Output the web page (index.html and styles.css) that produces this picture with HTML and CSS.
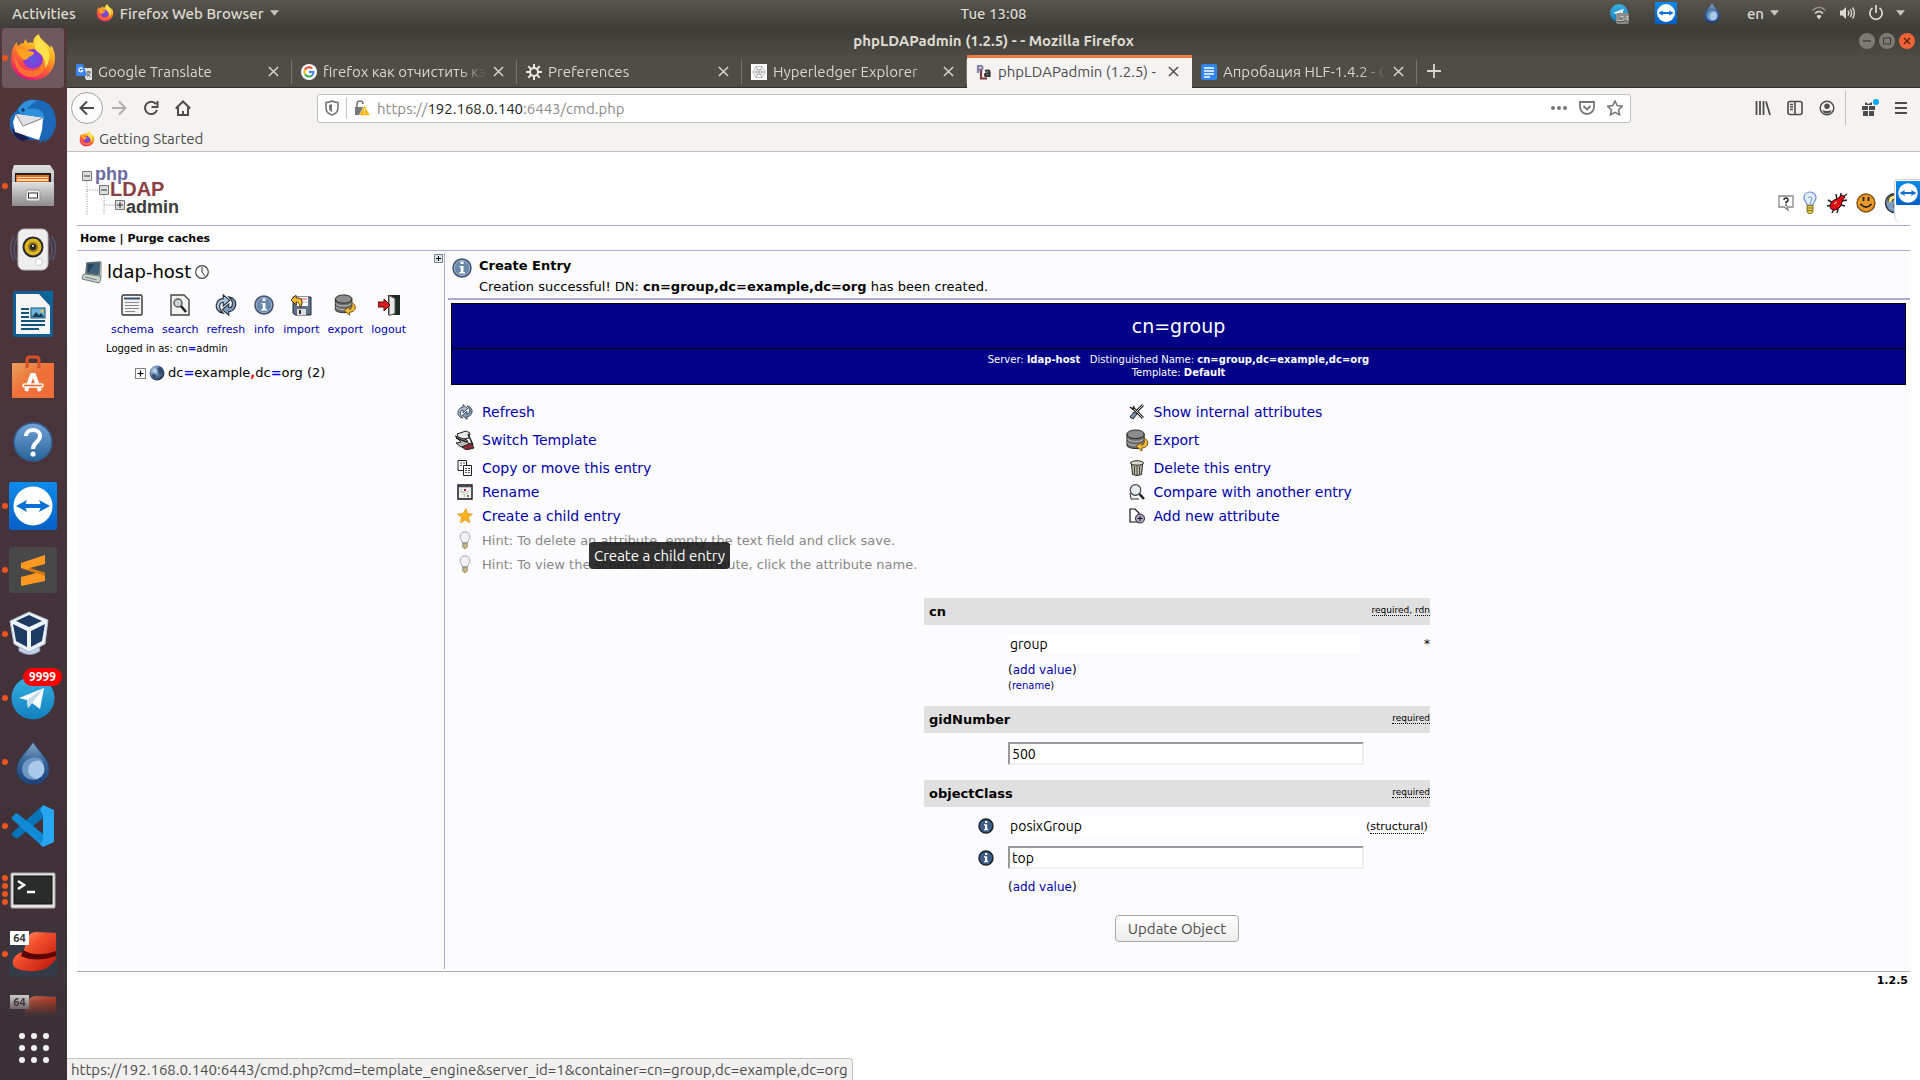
FILE: index.html
```html
<!doctype html>
<html lang="en">
	<head>
		<meta charset="utf-8">
		<title>phpLDAPadmin (1.2.5) -</title>
		<link rel="stylesheet" href="styles.css">
	</head>
	<body>
		<!-- shared icons -->
		<svg class="defs" width="0" height="0">
			<defs>
				<linearGradient id="g-fire" x1="0.8" y1="0" x2="0.3" y2="1">
					<stop offset="0" stop-color="#fff44f"/><stop offset="0.35" stop-color="#ffb01f"/><stop offset="0.65" stop-color="#ff5f36"/><stop offset="1" stop-color="#e4107c"/>
				</linearGradient>
				<radialGradient id="g-globe"><stop offset="0" stop-color="#5c5de0"/><stop offset="1" stop-color="#9033d8"/></radialGradient>
				<linearGradient id="g-tv" x1="0" y1="0" x2="0" y2="1"><stop offset="0" stop-color="#0d8bea"/><stop offset="1" stop-color="#0560c8"/></linearGradient>
				<linearGradient id="g-tg" x1="0" y1="0" x2="0" y2="1"><stop offset="0" stop-color="#38b0e3"/><stop offset="1" stop-color="#1180bd"/></linearGradient>
				<linearGradient id="g-drop" x1="0" y1="0" x2="0" y2="1"><stop offset="0" stop-color="#8fa9c4"/><stop offset="0.4" stop-color="#3f6d9e"/><stop offset="1" stop-color="#1c3f7c"/></linearGradient>
				<linearGradient id="g-silver" x1="0" y1="0" x2="0" y2="1"><stop offset="0" stop-color="#e0e0e0"/><stop offset="1" stop-color="#8c8c8c"/></linearGradient>
				<linearGradient id="g-hat" x1="0" y1="0" x2="1" y2="1"><stop offset="0" stop-color="#ffab84"/><stop offset="0.4" stop-color="#f4502d"/><stop offset="1" stop-color="#b81208"/></linearGradient>
				<linearGradient id="g-help" x1="0" y1="0" x2="0" y2="1"><stop offset="0" stop-color="#72a1d8"/><stop offset="1" stop-color="#27659a"/></linearGradient>
				<linearGradient id="g-bag" x1="0" y1="0" x2="1" y2="1"><stop offset="0" stop-color="#e9a05c"/><stop offset="0.5" stop-color="#ee7037"/><stop offset="1" stop-color="#ef6e38"/></linearGradient>
				<radialGradient id="g-earth" cx="0.35" cy="0.35" r="0.7"><stop offset="0" stop-color="#cfe0ee"/><stop offset="0.5" stop-color="#5e83ad"/><stop offset="1" stop-color="#20324f"/></radialGradient>
			</defs>
			<symbol id="i-firefox" viewBox="0 0 48 48">
				<path fill="url(#g-fire)" d="M4 14c1-3 3-5 4-6 0 2 0 3 1 4 2-2 4-3 6-3 0-2 1-3 2-4 0 2 1 3 2 4 4-1 5 0 5 0 0-4 2-7 6-9 0 4 5 7 9 11 1 1 2 2 2 3 1-1 1-2 1-3 4 6 5 13 3 20-3 9-11 15-21 15C11 46 2 37 2 26c0-5 1-9 2-12z"/>
				<circle cx="24" cy="25" r="10" fill="url(#g-globe)"/>
				<path fill="#ffa21f" d="M7 15c5-1 8 1 12 2 4 0 6 1 6 2 0 2-4 3-5 4-1 2-3 3-5 3-3-2-6-6-8-11z"/>
				<path fill="#ff8a22" d="M5 20c4 11 8 17 18 17 6 0 10-3 11-8 3 7-2 14-12 14S5 35 5 20z" opacity=".7"/>
				<path fill="#ffe04a" d="M30 2c0 5 7 8 9 13 3 6 1 15-3 19 1-8-2-12-7-16-5-3-4-11 1-16z"/>
			</symbol>
			<symbol id="i-tv" viewBox="0 0 48 48">
				<rect width="48" height="48" rx="2" fill="url(#g-tv)"/>
				<circle cx="24" cy="24" r="19.500" fill="#fff"/>
				<path fill="#0b70d5" d="M7 24l11-6-1.500 4h15L30 18l11 6-11 6 1.500-4h-15l1.500 4z"/>
			</symbol>
			<symbol id="i-telegram" viewBox="0 0 48 48">
				<circle cx="24" cy="24" r="21.500" fill="url(#g-tg)"/>
				<path fill="#fff" d="M10 24l25-10-4 21-8-6-4 5-1-8z"/><path fill="#c2dcec" d="M18 26l17-12-12 15-4 5z"/>
			</symbol>
			<symbol id="i-deluge" viewBox="0 0 48 48">
				<path fill="url(#g-drop)" stroke="#24477c" d="M24 4c6 10 16 17 16 27 0 9-7 15-16 15S8 40 8 31C8 21 18 14 24 4z"/>
				<circle cx="25" cy="31" r="10.500" fill="#a9c8ea"/>
				<path fill="#6d97c5" d="M35 24c-7-4-16 0-16 8 0 5 4 8 8 9-8 2-14-3-14-10 0-10 15-16 22-7z"/>
			</symbol>
			<symbol id="i-close" viewBox="0 0 12 12"><path d="M1 1l10 10M11 1L1 11" fill="none" stroke="currentColor" stroke-width="1.600"/></symbol>
			<symbol id="i-info" viewBox="0 0 20 20">
				<circle cx="10" cy="10" r="9" fill="#6a87ac" stroke="#44516a" stroke-width="1.500"/>
				<circle cx="10" cy="10" r="7.600" fill="none" stroke="#9ab3d2"/>
				<path fill="#fff" d="M8.500 3.500h3v2.600h-3zM7.500 8h4v6h1.500v1.500H7.300V14h1.400V9.300H7.500z"/>
			</symbol>
			<symbol id="i-info-dark" viewBox="0 0 16 16">
				<circle cx="8" cy="8" r="7" fill="#3d5c86" stroke="#1a1e28" stroke-width="1.400"/>
				<path fill="#fff" d="M7 3h2.200v2H7zM6 6.300h3.200v4.700h1v1.300H6V11h1V7.500H6z"/>
			</symbol>
			<symbol id="i-refresh" viewBox="0 0 24 24">
				<path fill="#a9c3dc" stroke="#27313d" stroke-width="1.300" d="M9 21C3 20 0 15 2 10c1-3 4-5 7-5V1l7 6-7 6V9c-3 0-4 2-4 5 0 3 2 5 4 7z"/>
				<path fill="#7f9fc0" stroke="#27313d" stroke-width="1.300" d="M15 3c6 1 9 6 7 11-1 3-4 5-7 5v4l-7-6 7-6v4c3 0 4-2 4-5 0-3-2-5-4-7z"/>
			</symbol>
			<symbol id="i-export" viewBox="0 0 24 24">
				<path fill="#6d6d6d" stroke="#222" d="M1.500 5v12c0 4 17 5 18 0V5z"/>
				<path fill="none" stroke="#c8c8c8" d="M2 10c1 4 16 4 17 0M2 14c1 4 16 4 17 0"/>
				<ellipse cx="10.500" cy="5.500" rx="9" ry="4.500" fill="#8c8c8c" stroke="#222"/>
				<path fill="#f3bd3c" stroke="#6b4808" d="M19 9c6 3 6 10-2 11v3l-6-5 6-4v3c3-1 3-4 2-8z"/>
			</symbol>
			<symbol id="i-bulb" viewBox="0 0 16 20">
				<path fill="#eef2f6" stroke="#9aa0a6" d="M8 1C4.500 1 2.500 3.500 2.500 6.500 2.500 9.500 5 10.500 5 13h6c0-2.500 2.500-3.500 2.500-6.500C13.500 3.500 11.500 1 8 1z"/>
				<path fill="#c6b67c" stroke="#77715c" stroke-width=".8" d="M5.500 13.500h5V18l-1.500 1.500H7L5.500 18z"/>
			</symbol>
			<symbol id="i-caret" viewBox="0 0 10 6"><path fill="currentColor" d="M0 0h10L5 6z"/></symbol>
			<symbol id="i-plusbox" viewBox="0 0 11 11"><rect x=".5" y=".5" width="10" height="10" fill="#fff" stroke="#808080"/><path stroke="#000" stroke-width="1.200" d="M2.500 5.500h6M5.500 2.500v6"/></symbol>
		</svg>

		<header class="topbar">
			<nav class="topbar-left">
				<button>Activities</button>
				<button class="app-menu"><svg width="18" height="18"><use href="#i-firefox"/></svg>Firefox Web Browser<svg class="caret" width="9" height="6"><use href="#i-caret"/></svg></button>
			</nav>
			<time class="clock">Tue 13:08</time>
			<div class="tray">
				<span class="tray-tg"><svg width="20" height="22"><use href="#i-telegram"/></svg><i>..54</i></span>
				<svg width="22" height="22"><use href="#i-tv"/></svg>
				<svg width="18" height="22" viewBox="5 2 38 46"><use href="#i-deluge" width="48" height="48"/></svg>
				<button class="lang">en<svg class="caret" width="9" height="6"><use href="#i-caret"/></svg></button>
				<div class="system">
					<svg width="16" height="14" viewBox="0 0 16 14"><g fill="none" stroke="#dfdbd2" stroke-width="1.600"><path d="M1.500 4.500c4-4 9-4 13 0" opacity=".5"/><path d="M4 7.500c2.500-2.500 5.500-2.500 8 0"/></g><path fill="#dfdbd2" d="M5.500 10c1.500-1.300 3.500-1.300 5 0L8 13.500z"/></svg>
					<svg width="17" height="14" viewBox="0 0 17 14"><path fill="#dfdbd2" d="M1 4.500h2.500L7 1v12L3.500 9.500H1z"/><path fill="none" stroke="#dfdbd2" stroke-width="1.400" d="M9 4.500q1.500 2.500 0 5M11.300 3q2.500 4 0 8M13.600 1.500q3.500 5.500 0 11"/></svg>
					<svg width="16" height="16" viewBox="0 0 16 16"><path fill="none" stroke="#dfdbd2" stroke-width="1.700" d="M4.500 3a6.200 6.200 0 1 0 7 0M8 0v8"/></svg>
					<svg class="caret" width="9" height="6"><use href="#i-caret"/></svg>
				</div>
			</div>
		</header>

		<div class="desktop">
			<aside class="dock">
				<ul class="launchers">
					<li class="active run"><svg width="48" height="48"><use href="#i-firefox"/></svg></li>
					<li><svg width="48" height="48" viewBox="0 0 48 48">
						<path fill="#1c68b8" d="M8 12C12 4 21 0 26 2c13-1 22 10 21 24-1 8-5 14-10 17l-2 2 1-4-6 5 1-4H12C4 38 0 32 1 23c0-4 3-8 7-11z"/>
						<path fill="#2f90dc" d="M9 12C13 3 22 0 28 3c-5 2-8 5-10 8 12-2 18 2 17 11L12 16z"/>
						<path fill="#181c50" d="M3 30c1 7 5 11 10 13l8-2z"/>
						<path fill="#fff" d="M7 16l27 4-1 12-3 10-24-8-2-10z"/><path fill="#e0e0e8" d="M7 16c2 6 4 10 8 12 7-2 14-4 19-8z"/><path fill="none" stroke="#888" d="M7 16l7 12 20-8"/>
						<circle cx="14" cy="12" r="1.800" fill="#17396b"/>
					</svg></li>
					<li class="run"><svg width="48" height="48" viewBox="0 0 48 48">
						<path fill="url(#g-silver)" d="M5 3h36l4 6v35H3V9z"/><path fill="#222" d="M6 11h36v9H6z"/><path fill="#e56a1c" d="M7 13h33v7H7z"/><path fill="#ffdcae" d="M8 15h31v1H8zM8 17h31v2H8z"/>
						<path fill="url(#g-silver)" d="M3 20h42v24H3z"/><rect x="17" y="28" width="14" height="11" rx="2" fill="#eee" stroke="#999"/><rect x="19.500" y="31" width="9" height="5" fill="#fff" stroke="#333"/>
					</svg></li>
					<li><svg width="48" height="48" viewBox="0 0 48 48">
						<path fill="none" stroke="#56658c" stroke-width="1.500" opacity=".7" d="M5 10q-7 12 0 25M8 12q-6 12 0 22M43 10q7 12 0 25M40 12q6 12 0 22"/>
						<rect x="9" y="3" width="30" height="41" rx="6" fill="#eee" stroke="#bbb"/><circle cx="24" cy="21" r="10.500" fill="#272727"/><circle cx="24" cy="21" r="8.500" fill="#e0b524"/><circle cx="24" cy="21" r="5" fill="#8d7420"/><circle cx="24" cy="21" r="3" fill="#222"/><circle cx="24" cy="20" r="1" fill="#fff"/><circle cx="30" cy="36" r="3.500" fill="#fff" stroke="#ccc"/>
					</svg></li>
					<li><svg width="48" height="48" viewBox="0 0 48 48">
						<path fill="#0f5f92" d="M6 1h26l12 12v32q0 2-2 2H6q-2 0-2-2V3q0-2 2-2z"/><path fill="#f5f5f5" d="M7 4h23l11 12v28H7z"/><path fill="#0769a2" d="M32 1h12v12z"/>
						<path stroke="#0f5678" stroke-width="2" d="M12 19h8M12 23h8M12 27h8M12 31h24M12 35h24M12 39h18"/><rect x="22" y="18" width="14" height="10" fill="#6fb4dc" stroke="#0f5678"/><path fill="#1f4057" d="M23 27l4-5 3 3 2-2 3 4z"/><circle cx="33" cy="21" r="1.500" fill="#f5c12e"/>
					</svg></li>
					<li><svg width="48" height="48" viewBox="0 0 48 48">
						<path fill="url(#g-bag)" d="M3 9h42v35H3z"/><path fill="none" stroke="#d65026" stroke-width="3" d="M18 14V6q0-3 3-3h6q3 0 3 3v8"/>
						<path fill="none" stroke="#fff" stroke-width="4" d="M17 37l6-16h2l6 16"/><rect x="14" y="30" width="20" height="3" rx="1.500" fill="#ee6230" stroke="#fff" stroke-width="1.500"/>
					</svg></li>
					<li><svg width="48" height="48" viewBox="0 0 48 48"><circle cx="24" cy="24" r="19" fill="url(#g-help)" stroke="#315e8d" stroke-width="1.500"/><path fill="none" stroke="#fff" stroke-width="4" d="M17 18c0-8 14-8 14 0 0 6-7 6-7 13"/><circle cx="24" cy="36" r="2.600" fill="#fff"/></svg></li>
					<li class="run"><svg width="48" height="48"><use href="#i-tv"/></svg></li>
					<li class="run"><svg width="48" height="48" viewBox="0 0 48 48"><rect y="1" width="48" height="46" rx="3" fill="#484848"/><path fill="#ff9820" d="M12 17l24-8v9l-15 4 15 5v8l-24 5v-9l15-4-15-5z"/><path fill="#d77710" d="M21 22l15 5v3l-18-6z"/></svg></li>
					<li class="run"><svg width="48" height="48" viewBox="0 0 48 48">
						<path fill="#c7d3e8" stroke="#8b9dbc" d="M10 35q10 6 20 0l1 6q-10 7-21 0z"/><path fill="#eef2fa" stroke="#a8b6d0" d="M20 2l19 8-3 24-16 8L5 34 1 11z"/>
						<path fill="#1d3a62" d="M20 5l13 6-13 6L7 11zM4 14l14 7v16L7 31zM22 21l14-7-3 17-11 6z"/>
					</svg></li>
					<li class="run"><svg width="48" height="48"><use href="#i-telegram"/></svg><span class="badge">9999</span></li>
					<li class="run"><svg width="48" height="48"><use href="#i-deluge"/></svg></li>
					<li class="run"><svg width="48" height="48" viewBox="0 0 48 48"><path fill="#0873b8" d="M34 3v13L9 36q-2 1-4-1l-2-2q-1-1 0-2z"/><path fill="#118bd6" d="M3 17q-1-1 0-2l3-3q2-1 3 0l25 20v13z"/><path fill="#27a6f2" d="M34 3l11 5v32l-11 5-3-3 3-3V13l-3-5z"/></svg></li>
					<li class="run run-many"><svg width="48" height="48" viewBox="0 0 48 48"><rect x="2" y="7" width="44" height="35" rx="1" fill="#e2e2e0" stroke="#aaa"/><rect x="5" y="10" width="38" height="28" fill="#2a2c2b" stroke="#111"/><path fill="none" stroke="#fff" stroke-width="2.500" d="M9 15l6 4-6 4M18 26h8"/></svg></li>
					<li class="run"><svg width="48" height="48" viewBox="0 0 48 48"><rect y="1" width="48" height="46" rx="2" fill="#353b46"/><path fill="url(#g-hat)" d="M14 24L18 8q3-6 9-6l20 1v26Q38 43 20 41 1 40 4 30q3-7 10-8z"/><path fill="#5c0604" d="M14 20q13 8 33 1v5q-21 7-35 0z"/></svg><span class="bits">64</span></li>
					<li class="fading"><svg width="48" height="48" viewBox="0 0 48 48"><rect y="1" width="48" height="46" rx="2" fill="#353b46"/><path fill="url(#g-hat)" d="M14 24L18 8q3-6 9-6l20 1v26Q38 43 20 41 1 40 4 30q3-7 10-8z"/></svg><span class="bits">64</span></li>
				</ul>
				<button class="show-apps" aria-label="Show Applications"><svg width="32" height="32" viewBox="0 0 32 32" fill="#f2f2f2"><circle cx="4" cy="4" r="3"/><circle cx="16" cy="4" r="3"/><circle cx="28" cy="4" r="3"/><circle cx="4" cy="16" r="3"/><circle cx="16" cy="16" r="3"/><circle cx="28" cy="16" r="3"/><circle cx="4" cy="28" r="3"/><circle cx="16" cy="28" r="3"/><circle cx="28" cy="28" r="3"/></svg></button>
			</aside>

			<section class="window">
				<div class="titlebar">
					<span class="title">phpLDAPadmin (1.2.5) - - Mozilla Firefox</span>
					<div class="controls">
						<button aria-label="Minimize"><svg width="16" height="16" viewBox="0 0 16 16"><path stroke="#3a3935" stroke-width="1.300" d="M4 8h8"/></svg></button>
						<button aria-label="Maximize"><svg width="16" height="16" viewBox="0 0 16 16"><rect x="4.500" y="5" width="7" height="6" fill="none" stroke="#3a3935"/></svg></button>
						<button class="close" aria-label="Close"><svg width="16" height="16" viewBox="0 0 16 16"><path stroke="#5a1d08" stroke-width="1.300" d="M5 5l6 6M11 5l-6 6"/></svg></button>
					</div>
				</div>

				<div class="tabs">
					<div class="tab">
						<svg width="16" height="16" viewBox="0 0 16 16"><path fill="#ddd" d="M6 4h9q1 0 1 1v11h-6z"/><path fill="#3b84f0" d="M0 1q0-1 1-1h6l4 12H1q-1 0-1-1z"/><path fill="none" stroke="#fff" stroke-width="1.200" d="M6.500 4.800a2 2 0 1 0 .2 1.800H5"/><path stroke="#666" d="M10 8h5M12.500 7v1.500M14 8.500q-1 3-3 4M11 9q1 3 3.500 3.500" fill="none"/></svg>
						<span>Google Translate</span><button aria-label="Close tab"><svg width="11" height="11"><use href="#i-close"/></svg></button>
					</div>
					<div class="tab">
						<svg width="16" height="16" viewBox="0 0 16 16"><circle cx="8" cy="8" r="8" fill="#fff"/><g fill="none" stroke-width="2"><path stroke="#ea4335" d="M4 5.800a4.600 4.600 0 0 1 7.300-1.200"/><path stroke="#fbbc05" d="M4 5.800a4.600 4.600 0 0 0 0 4.400"/><path stroke="#34a853" d="M4 10.200a4.600 4.600 0 0 0 7 1.200"/><path stroke="#4285f4" d="M11 11.400a4.600 4.600 0 0 0 1.500-3.400H8"/></g></svg>
						<span>firefox как отчистить кэш</span><button aria-label="Close tab"><svg width="11" height="11"><use href="#i-close"/></svg></button>
					</div>
					<div class="tab">
						<svg width="16" height="16" viewBox="0 0 16 16" fill="none" stroke="#e8e6e1"><circle cx="8" cy="8" r="4" stroke-width="2"/><path stroke-width="2" d="M8 0v4M8 12v4M0 8h4M12 8h4M2.300 2.300l2.800 2.800M10.900 10.900l2.800 2.800M13.700 2.300l-2.800 2.800M5.100 10.900l-2.800 2.800"/></svg>
						<span>Preferences</span><button aria-label="Close tab"><svg width="11" height="11"><use href="#i-close"/></svg></button>
					</div>
					<div class="tab">
						<svg width="16" height="16" viewBox="0 0 16 16"><path fill="#fff" d="M0 0h16v16H0z"/><g fill="none" stroke="#999" stroke-width=".7"><path d="M5 2.500h6L14 8l-3 5.500H5L2 8z"/><circle cx="8" cy="8" r="3"/><path d="M5 2.500l6 11M11 2.500l-6 11M2 8h12"/></g></svg>
						<span>Hyperledger Explorer</span><button aria-label="Close tab"><svg width="11" height="11"><use href="#i-close"/></svg></button>
					</div>
					<div class="tab current">
						<svg width="16" height="16" viewBox="0 0 16 16" fill="none" stroke-width="2.200"><path stroke="#8080a8" d="M2 9V2h2.500q2 0 2 1.800t-2 1.800H2"/><path stroke="#80383c" d="M5 6v8.500h6"/><path stroke="#333" d="M9 7q4.500-1.500 4.500 1.500v4.500M13 9.500q-4-.5-4 1.500t4 .8"/></svg>
						<span>phpLDAPadmin (1.2.5) -</span><button aria-label="Close tab"><svg width="11" height="11"><use href="#i-close"/></svg></button>
					</div>
					<div class="tab">
						<svg width="16" height="16" viewBox="0 0 16 16"><rect width="16" height="16" rx="2" fill="#3086f6"/><path stroke="#fff" stroke-width="1.600" d="M3 4h10M3 7h10M3 10h10M3 13h6"/></svg>
						<span>Апробация HLF-1.4.2 - G</span><button aria-label="Close tab"><svg width="11" height="11"><use href="#i-close"/></svg></button>
					</div>
					<button class="new-tab" aria-label="New tab"><svg width="14" height="14" viewBox="0 0 14 14"><path stroke="currentColor" stroke-width="1.800" d="M7 0v14M0 7h14"/></svg></button>
				</div>

				<div class="navbar">
					<button class="back" aria-label="Back"><svg width="16" height="16" viewBox="0 0 16 16"><path d="M15 8H1.500M8 1.500L1.500 8 8 14.500"/></svg></button>
					<button class="forward" aria-label="Forward"><svg width="16" height="16" viewBox="0 0 16 16"><path d="M1 8h13.500M8 1.500L14.500 8 8 14.500"/></svg></button>
					<button aria-label="Reload"><svg width="16" height="16" viewBox="0 0 16 16"><path d="M13 4a6.200 6.200 0 1 0 1 6M14.500 1v6h-6"/></svg></button>
					<button aria-label="Home"><svg width="16" height="16" viewBox="0 0 16 16"><path d="M.8 8.500L8 1.500l7.200 7M3 7v8h10V7M8 15v-4"/></svg></button>
					<div class="urlbar">
						<svg width="14" height="16" viewBox="0 0 14 16"><path fill="none" stroke="#777" stroke-width="1.600" d="M1 2.500q3 0 6-1.500 3 1.500 6 1.500V8q0 5-6 7-6-2-6-7z"/><path fill="#777" d="M7 4v8q-3-1-3-4V5z"/></svg>
						<i class="url-sep"></i>
						<svg width="16" height="16" viewBox="0 0 16 16"><path fill="none" stroke="#777" stroke-width="1.600" d="M3 8V4q0-3 3-3t3 3"/><path fill="#777" d="M1 7h9v8H1z"/><path fill="#ffb400" stroke="#fff" stroke-width=".5" d="M10.500 5L16 15.500H5z"/><path stroke="#fff" stroke-width="1.300" d="M10.500 8.500v3M10.500 12.800v1.200"/></svg>
						<span class="url">https://<b>192.168.0.140</b>:6443/cmd.php</span>
						<svg width="16" height="6" viewBox="0 0 16 6" fill="#777"><circle cx="2" cy="3" r="2"/><circle cx="8" cy="3" r="2"/><circle cx="14" cy="3" r="2"/></svg>
						<svg width="16" height="16" viewBox="0 0 16 16" fill="none" stroke="#777" stroke-width="1.800"><path d="M1 2h14v5a7 7 0 0 1-14 0zM4.500 6L8 9.500 11.500 6"/></svg>
						<svg width="16" height="16" viewBox="0 0 16 16" fill="none" stroke="#777" stroke-width="1.600"><path d="M8 1l2.200 4.600 5 .7-3.600 3.500.9 5L8 12.400l-4.500 2.400.9-5L.8 6.300l5-.7z"/></svg>
					</div>
					<div class="tools">
						<button aria-label="Library"><svg width="16" height="16" viewBox="0 0 16 16"><path stroke-width="1.800" d="M1.500 1v14M5 1v14M8.500 1v14M11 1.500l4 13.500"/></svg></button>
						<button aria-label="Sidebars"><svg width="16" height="16" viewBox="0 0 16 16"><path stroke-width="1.600" d="M3 1.500h10q2 0 2 2v9q0 2-2 2H3q-2 0-2-2v-9q0-2 2-2zM8 1.500v13M3 4.500h3M3 7h3M3 9.500h3"/></svg></button>
						<button aria-label="Account"><svg width="16" height="16" viewBox="0 0 16 16"><circle cx="8" cy="8" r="6.800" stroke-width="1.500"/><path fill="#4d4d4d" stroke="none" d="M8 3.500a2.600 2.600 0 0 1 0 5.500 2.600 2.600 0 0 1 0-5.500zM3.500 10q4.500 2 9 0-1 3.500-4.500 3.500T3.500 10z"/></svg></button>
						<i class="tool-sep"></i>
						<button class="gift" aria-label="What's new"><svg width="18" height="18" viewBox="0 0 18 18"><g fill="#4d4d4d" stroke="none"><path d="M1 7h6v4H1zM8 7h6v4H8zM2 12h5v5H2zM8 12h5v5H8zM4 3l3.500 2L11 3v3H4z"/><circle cx="15" cy="3" r="3" fill="#00a9f4"/></g></svg></button>
						<button aria-label="Menu"><svg width="12" height="16" viewBox="0 0 12 16"><path stroke-width="2" d="M0 3h12M0 8h12M0 13h12"/></svg></button>
					</div>
				</div>
				<div class="bookmarks"><a href="#"><svg width="16" height="16"><use href="#i-firefox"/></svg>Getting Started</a></div>

				<main class="page">
					<div class="page-head">
						<svg class="logo" width="102" height="50" viewBox="0 0 102 50" role="img">
							<path stroke="#c4c4c4" stroke-width="2" stroke-dasharray="1 1.500" fill="none" d="M6 16v34M6 25h12M23 30v20M23 40h11"/>
							<g fill="#ddd" stroke="#777"><path d="M1.500 6.500h9v9h-9zM18.500 20.500h9v9h-9zM34.500 35.500h9v9h-9z"/></g>
							<path stroke="#333" d="M3 11h6M20 25h6M36 40h6M39 37v6"/>
							<text class="logo-php" x="14" y="15">php</text>
							<text class="logo-ldap" x="29" y="31">LDAP</text>
							<text class="logo-admin" x="45" y="48">admin</text>
						</svg>
						<div class="head-links">
							<a href="#" aria-label="Forum"><svg width="16" height="18" viewBox="0 0 16 18"><path fill="#fff" stroke="#888" stroke-width="1.300" d="M1 2h14v11H9l1 3-4-3H1z"/><path fill="none" stroke="#222" stroke-width="1.400" d="M6 6q0-2 2-2t2 2-2 2v1.500M8 10.500V12"/></svg></a>
							<a href="#" aria-label="Request a feature"><svg width="16" height="24" viewBox="0 0 16 24"><path fill="#e3ebff" stroke="#6b8ed8" stroke-width="1.200" d="M8 1C4 1 2 4 2 7s3 4 3 7h6c0-3 3-4 3-7s-2-6-6-6z"/><path fill="none" stroke="#7d9bdc" d="M6 7q2-3 4 0L8 13"/><path fill="#e6cb45" stroke="#86762a" d="M5 14.500h6V21l-2 1.500H7L5 21zM5 17h6M5 19.500h6"/></svg></a>
							<a href="#" aria-label="Report a bug"><svg width="22" height="22" viewBox="0 0 22 22"><path fill="none" stroke="#222" stroke-width="1.500" d="M2 8l5 3M1 14l6-1M6 21l2-4M11 21l1-4M10 2l1 6M15 1l-1 6M21 2l-4 3M21 8l-5 1M19 14l-4-1"/><path fill="#dc0d12" stroke="#3c0304" d="M4 14q1-6 7-7l5-4 3 2-3 4q0 7-7 9-5 0-5-4z"/><path stroke="#fff" d="M8 12l3-2"/></svg></a>
							<a href="#" aria-label="Donate"><svg width="20" height="22" viewBox="0 0 20 22"><circle cx="10" cy="11" r="9" fill="#e99a2b" stroke="#80500c" stroke-width="1.400"/><path stroke="#222" stroke-width="1.800" fill="none" d="M7.500 5v4M12.500 5v4M4.500 12q5.500 6 11 0"/></svg></a>
							<a href="#" aria-label="Help"><svg width="22" height="22" viewBox="0 0 22 22"><circle cx="11" cy="11" r="9.500" fill="#7d9fc2" stroke="#2d3643" stroke-width="1.500"/><path fill="none" stroke="#4a3d12" stroke-width="5" d="M6 10q0-5 5-5t5 4-4 5v2"/><path fill="none" stroke="#fbe489" stroke-width="3" d="M6 10q0-5 5-5t5 4-4 5v2M12 18v3"/></svg></a>
						</div>
						<div class="tv-panel"><svg width="24" height="24"><use href="#i-tv"/></svg></div>
					</div>
					<nav class="page-nav"><a href="#">Home</a> | <a href="#">Purge caches</a></nav>

					<div class="columns">
						<aside class="tree">
							<button class="expand" aria-label="Expand"><svg width="9" height="9" viewBox="0 0 9 9"><path fill="#d6e4e8" stroke="#70858c" d="M.5.5h8v8h-8z"/><path stroke="#000" d="M2 4.500h5M4.500 2v5"/></svg></button>
							<h2 class="server">
								<svg width="22" height="24" viewBox="0 0 22 24"><path fill="#3a607b" stroke="#5b6d70" stroke-width="1.500" d="M6 3l13-1-1 13-13-2z"/><path fill="#27465e" d="M7 4l6 0-5 8H7z"/><path fill="#ccd6ce" stroke="#6b7a75" d="M4 14l15 2 1 3-2 4L1 19l1-4z"/><path stroke="#717f79" d="M4 17l12 3M20 2v15"/></svg>
								<span>ldap-host</span>
								<svg width="14" height="14" viewBox="0 0 14 14"><circle cx="7" cy="7" r="6.300" fill="#fff" stroke="#444" stroke-width="1.200"/><path fill="none" stroke="#333" d="M7 2v5l3 4"/></svg>
							</h2>
							<ul class="server-menu">
								<li><a href="#"><svg width="22" height="22" viewBox="0 0 22 22"><rect x="1" y="1" width="20" height="20" rx="1.500" fill="#f4f4f4" stroke="#333" stroke-width="1.400"/><path stroke="#3a5078" stroke-width="2" d="M3 4.500h16"/><path stroke="#888" d="M4 8.500h14M4 11.500h14M4 14.500h14M4 17.500h10"/></svg>schema</a></li>
								<li><a href="#"><svg width="22" height="22" viewBox="0 0 22 22"><path fill="#f2f2ee" stroke="#444" stroke-width="1.400" d="M2 1h13l5 5v15H2z"/><circle cx="9" cy="9" r="4" fill="#cdd5d9" stroke="#555" stroke-width="1.400"/><path stroke="#222" stroke-width="2.600" d="M12 12l5 6"/></svg>search</a></li>
								<li><a href="#"><svg width="22" height="22"><use href="#i-refresh"/></svg>refresh</a></li>
								<li><a href="#"><svg width="22" height="22" viewBox="-1 -1 22 22"><use href="#i-info" width="20" height="20"/></svg>info</a></li>
								<li><a href="#"><svg width="22" height="22" viewBox="0 0 22 22"><path fill="#5f7088" stroke="#222b38" d="M3 3h18v18H5l-2-2z"/><path fill="#fff" d="M7 3h11v9H7z"/><path stroke="#d44" d="M8 5h9"/><path stroke="#bbb" d="M8 8h9"/><path fill="#ddd" d="M7 15h9v6H7z"/><path fill="#333" d="M9 16h2v4H9z"/><path fill="#f2bb3b" stroke="#5c3c05" d="M1 6l5-5v3q7-1 6 6l-2 4q0-6-4-6v3z"/></svg>import</a></li>
								<li><a href="#"><svg width="22" height="22"><use href="#i-export"/></svg>export</a></li>
								<li><a href="#"><svg width="22" height="22" viewBox="0 0 22 22"><path fill="#1e2c24" d="M10 1h12v20H10z"/><path fill="#e8e8e4" stroke="#555" d="M11 1.500l6 3v15l-6 2z"/><path fill="#d81e1e" stroke="#5a0a0a" d="M0 8h6V5l6 6-6 6v-4H0z"/></svg>logout</a></li>
							</ul>
							<p class="logged">Logged in as: cn<b class="eq">=</b>admin</p>
							<p class="node"><svg width="11" height="11"><use href="#i-plusbox"/></svg><svg class="earth" width="16" height="16" viewBox="0 0 16 16"><circle cx="8" cy="8" r="7.500" fill="url(#g-earth)"/><path fill="#1f3a5e" d="M8 3l4-1 2 4-3 4-2-3zM4 8l3 2-1 4-3-3z" opacity=".7"/></svg><a href="#">dc<b class="eq">=</b>example<b class="comma">,</b>dc<b class="eq">=</b>org (2)</a></p>
						</aside>

						<section class="entry">
							<div class="notice">
								<svg width="20" height="24" viewBox="0 0 20 20"><use href="#i-info"/></svg>
								<div><h3>Create Entry</h3><p>Creation successful! DN: <b>cn=group,dc=example,dc=org</b> has been created.</p></div>
							</div>
							<header class="entry-head">
								<h1>cn=group</h1>
								<p>Server: <b>ldap-host</b> &nbsp; Distinguished Name: <b>cn=group,dc=example,dc=org</b><br>Template: <b>Default</b></p>
							</header>

							<div class="actions">
								<ul>
									<li><svg width="16" height="16"><use href="#i-refresh"/></svg><a href="#">Refresh</a></li>
									<li class="tall"><svg width="22" height="20" viewBox="0 0 22 20"><path fill="#e8e8e8" stroke="#222" d="M3 4l9-3 4 2-1 5-10 2z"/><path fill="#bbb" stroke="#222" d="M1 6l12 4 2 5-8 2-5-4 5-1z"/><path fill="#8c2932" stroke="#222" d="M8 17l9-4 3 5-8 2z"/><path fill="none" stroke="#222" stroke-width="1.500" d="M14 4l5 11M2 8l11 4"/></svg><a href="#">Switch Template</a></li>
									<li><svg width="16" height="16" viewBox="0 0 16 16"><g fill="#fff" stroke="#222"><path d="M1 .5h8.500v10H1z"/><path d="M6.500 5.500h8v10h-8z"/></g><path stroke="#555" stroke-dasharray="2 1" d="M3 3h5M3 5.500h3M8 8.500h5M8 10.500h5M8 12.500h5"/></svg><a href="#">Copy or move this entry</a></li>
									<li><svg width="16" height="16" viewBox="0 0 16 16"><path fill="#f2f2ec" stroke="#111" stroke-width="1.400" d="M1 1h14v14H1z"/><path stroke="#446" stroke-width="1.500" d="M1 2.500h14"/><path fill="#b22" d="M7 5h2v2H7z"/><path fill="#585" d="M10 11h2v2h-2z"/><path stroke="#888" stroke-dasharray="1 1" d="M4 5v3h3v4h2M10 7v3" fill="none"/></svg><a href="#">Rename</a></li>
									<li class="hovered"><svg width="16" height="16" viewBox="0 0 16 16"><path fill="#fbb321" stroke="#d88a10" stroke-width=".6" d="M9 .5l1.500 5 5 .5-4 3.300 1.300 5.700-4.500-3L3.500 15l1-5.500L.5 6l5.500-.5z"/></svg><a href="#">Create a child entry</a><span class="tooltip">Create a child entry</span></li>
									<li class="hint"><svg width="16" height="18"><use href="#i-bulb"/></svg>Hint: To delete an attribute, empty the text field and click save.</li>
									<li class="hint"><svg width="16" height="18"><use href="#i-bulb"/></svg>Hint: To view the schema for an attribute, click the attribute name.</li>
								</ul>
								<ul>
									<li><svg width="16" height="16" viewBox="0 0 16 16"><path stroke="#222" stroke-width="2.800" d="M4 4l10 10M14 1L6 9"/><path stroke="#ddd" d="M4 4l10 10M14 1L6 9"/><path fill="none" stroke="#222" stroke-width="1.500" d="M1 3l3 2 1-3"/><path fill="#7894b6" stroke="#222" d="M1 13l4-5 3 2-4 5z"/></svg><a href="#">Show internal attributes</a></li>
									<li class="tall"><svg width="23" height="23"><use href="#i-export"/></svg><a href="#">Export</a></li>
									<li><svg width="16" height="16" viewBox="0 0 16 16"><path fill="#b9b9a8" stroke="#222" d="M2.500 4h11l-1 10.500q-4.500 2-9 0z"/><path stroke="#44443c" d="M5.500 6v8M8 6v9M10.500 6v8"/><ellipse cx="8" cy="3" rx="6.500" ry="2.200" fill="#deded0" stroke="#222"/></svg><a href="#">Delete this entry</a></li>
									<li><svg width="16" height="16" viewBox="0 0 16 16"><path fill="#eee" stroke="#333" d="M1 9l1 6h8"/><circle cx="6.500" cy="6" r="5.300" fill="#e4ecef" stroke="#444" stroke-width="1.200"/><path stroke="#222" stroke-width="2.600" d="M10.500 10l4.500 5"/></svg><a href="#">Compare with another entry</a></li>
									<li><svg width="16" height="16" viewBox="0 0 16 16"><path fill="#fff" stroke="#111" stroke-width="1.200" d="M1 1h5l4 4v9H1z"/><circle cx="11" cy="10.500" r="4.500" fill="#b0a4cc" stroke="#222"/><path stroke="#111" d="M8.500 10.500h5M11 8v5"/></svg><a href="#">Add new attribute</a></li>
								</ul>
							</div>

							<form class="attributes">
								<div class="attr-head"><label for="cn">cn</label><span><u>required</u>, <u>rdn</u></span></div>
								<div class="attr-row"><span></span><input id="cn" class="fixed" type="text" value="group" readonly><span class="mark">*</span></div>
								<div class="attr-links">(<a href="#">add value</a>)<small>(<a href="#">rename</a>)</small></div>

								<div class="attr-head"><label for="gid">gidNumber</label><span><u>required</u></span></div>
								<div class="attr-row"><span></span><input id="gid" type="text" value="500"></div>

								<div class="attr-head"><label for="oc">objectClass</label><span><u>required</u></span></div>
								<div class="attr-row"><svg width="16" height="16"><use href="#i-info-dark"/></svg><input id="oc" class="fixed" type="text" value="posixGroup" readonly><span class="kind">(<u>structural</u>)</span></div>
								<div class="attr-row next"><svg width="16" height="16"><use href="#i-info-dark"/></svg><input type="text" value="top" aria-label="objectClass"></div>
								<div class="attr-links">(<a href="#">add value</a>)</div>
								<button class="update" type="button">Update Object</button>
							</form>
						</section>
					</div>
					<footer class="version">1.2.5</footer>
				</main>
				<div class="status">https://192.168.0.140:6443/cmd.php?cmd=template_engine&amp;server_id=1&amp;container=cn=group,dc=example,dc=org</div>
			</section>
		</div>
	</body>
</html>
```
FILE: styles.css
```css
* {
	box-sizing: border-box;
}

body {
	margin: 0;
	height: 100vh;
	display: flex;
	flex-direction: column;
	overflow: hidden;
	font-family: Ubuntu, "Noto Sans", sans-serif;
	font-size: 15px;
}

button {
	margin: 0;
	padding: 0;
	border: 0;
	background: none;
	color: inherit;
	font: inherit;
}

svg {
	flex: none;
	display: block;
}

ul, p, h1, h2, h3 {
	margin: 0;
	padding: 0;
	list-style: none;
}

a {
	color: #0000aa;
	text-decoration: none;
}

.defs {
	position: absolute;
}

/* gnome top bar */
.topbar {
	display: grid;
	grid-template-columns: 67px 1fr auto 1fr;
	align-items: center;
	height: 28px;
	padding-bottom: 2px;
	background: linear-gradient(#5a564e, #3e3d38);
	color: #dfdbd2;
	font-weight: 500;
	text-shadow: 0 1px 1px #2a2926;
}

.topbar-left {
	grid-column: 1 / 3;
	display: flex;
	gap: 20px;
	padding-left: 12px;
}

.app-menu, .lang {
	display: flex;
	align-items: center;
	gap: 6px;
}

.caret {
	color: #c9c5bc;
}

.tray {
	display: flex;
	align-items: center;
	justify-content: flex-end;
	gap: 26px;
	padding-right: 15px;
}

.tray-tg {
	position: relative;
}

.tray-tg i {
	position: absolute;
	right: 0;
	bottom: 0;
	background: #8c8c8c;
	border-radius: 2px;
	font-size: 8px;
	font-style: normal;
	line-height: 11px;
}

.system {
	display: flex;
	align-items: center;
	gap: 12px;
	margin-left: 6px;
}

.desktop {
	flex: 1;
	min-height: 0;
	display: flex;
}

/* dock */
.dock {
	width: 67px;
	display: flex;
	flex-direction: column;
	background: linear-gradient(#523639, #46333b 50%, #3c3136);
}

.launchers {
	flex: 1;
	min-height: 0;
	overflow: hidden;
}

.launchers li {
	position: relative;
	display: flex;
	align-items: center;
	justify-content: center;
	width: 62px;
	height: 60px;
	margin: 0 2px 4px;
	border-radius: 4px;
}

.launchers .active {
	background: #70595e;
}

.run::before {
	content: "";
	position: absolute;
	left: 0;
	width: 6px;
	height: 6px;
	border-radius: 3px;
	background: #e95420;
}

.run-many::before {
	top: 15px;
	box-shadow: 0 8px #e95420, 0 16px #e95420, 0 24px #e95420;
}

.badge {
	position: absolute;
	top: 0;
	right: 2px;
	padding: 0 6px;
	border-radius: 10px;
	background: #f00;
	color: #fff;
	font-size: 12px;
	font-weight: 700;
	line-height: 18px;
}

.bits {
	position: absolute;
	left: 8px;
	top: 7px;
	width: 19px;
	background: #fff;
	color: #333;
	font-size: 11px;
	font-weight: 700;
	line-height: 14px;
	text-align: center;
}

.fading {
	-webkit-mask-image: linear-gradient(#000, transparent 28px);
	mask-image: linear-gradient(#000, transparent 28px);
}

.show-apps {
	display: flex;
	justify-content: center;
	padding: 12px 0 16px;
}

/* browser window */
.window {
	position: relative;
	flex: 1;
	min-width: 0;
	display: flex;
	flex-direction: column;
	background: #fff;
}

.titlebar {
	position: relative;
	display: flex;
	align-items: center;
	justify-content: center;
	height: 27px;
	padding-bottom: 2px;
	background: linear-gradient(#3c3b37, #4d4a43);
	color: #dfdbd2;
	font-weight: 600;
}

.controls {
	position: absolute;
	right: 5px;
	display: flex;
	gap: 4px;
}

.controls button {
	border-radius: 8px;
	background: #7d7a72;
}

.controls .close {
	background: #ee6437;
}

.tabs {
	display: flex;
	height: 33px;
	background: #504d46;
	border-bottom: 1px solid #33322f;
	color: #d9d6cf;
}

.tab {
	position: relative;
	display: flex;
	align-items: center;
	gap: 6px;
	width: 225px;
	padding: 1px 13px 0 9px;
}

.tab::after {
	content: "";
	position: absolute;
	right: 0;
	top: 5px;
	height: 24px;
	border-right: 1px solid #77746d;
}

.tab span {
	flex: 1;
	overflow: hidden;
	white-space: nowrap;
	-webkit-mask-image: linear-gradient(to left, transparent, #000 28px);
	mask-image: linear-gradient(to left, transparent, #000 28px);
}

.current {
	height: 33px;
	background: #f4f3f2;
	border-top: 3px solid #f07746;
	padding-top: 0;
	padding-bottom: 3px;
	color: #4c4c4c;
}

.current::after {
	display: none;
}

.current span {
	-webkit-mask-image: none;
	mask-image: none;
}

.new-tab {
	padding: 0 10px;
}

.navbar {
	display: flex;
	align-items: center;
	height: 40px;
	padding: 0 13px 0 4px;
	background: #f4f3f2;
}

.navbar button svg {
	fill: none;
	stroke: #4d4d4d;
	stroke-width: 2;
}

.navbar > button {
	width: 32px;
	height: 32px;
	padding: 8px;
}

.navbar > .back {
	border: 1px solid #a5a3a0;
	border-radius: 16px;
	padding: 7px;
	background: #fcfcfc;
}

.forward {
	opacity: .4;
}

.urlbar {
	flex: 1;
	display: flex;
	align-items: center;
	gap: 12px;
	height: 29px;
	margin: 0 124px 0 118px;
	padding: 0 7px;
	border: 1px solid #c3c1be;
	border-radius: 3px;
	background: #fff;
}

.url-sep, .tool-sep {
	width: 1px;
	height: 22px;
	margin: 0 -5px;
	background: #c6c4c1;
}

.url {
	flex: 1;
	margin-left: -5px;
	color: #8c8c8c;
}

.url b {
	color: #222;
	font-weight: 400;
}

.tools {
	display: flex;
	align-items: center;
	gap: 16px;
}

.tools .tool-sep {
	height: 34px;
	margin: 0 -6px;
}

.gift {
	margin-left: 5px;
}

.bookmarks {
	height: 24px;
	padding: 0 12px;
	background: #f4f3f2;
	border-bottom: 1px solid #c3c1be;
}

.bookmarks a {
	display: flex;
	align-items: center;
	gap: 4px;
	color: #4c4c4c;
	line-height: 21px;
}

/* phpldapadmin */
.page {
	flex: 1;
	padding: 10px;
	font-family: "DejaVu Sans", sans-serif;
	font-size: 13px;
}

.page-head {
	position: relative;
	display: flex;
	justify-content: space-between;
	height: 64px;
	padding: 3px 4px 0;
	border-bottom: 1px solid #aaaacc;
}

.logo {
	overflow: visible;
}

.logo-php, .logo-ldap, .logo-admin {
	font-family: "Liberation Sans", sans-serif;
	font-weight: 700;
	font-size: 18px;
}

.logo-php {
	fill: #6a6aa0;
}

.logo-ldap {
	fill: #8b3f44;
	font-size: 20px;
}

.logo-admin {
	fill: #3c3c3c;
}

.head-links {
	display: flex;
	align-items: center;
	gap: 8px;
	padding-top: 16px;
}

.tv-panel {
	position: absolute;
	right: -10px;
	top: 17px;
	height: 44px;
	padding: 1px 0 0 1px;
	background: #fff;
	border: 1px solid #ccd;
	border-width: 1px 0 0 1px;
	border-radius: 4px 0 0 8px;
}

.page-nav {
	height: 25px;
	padding: 1px 3px 0;
	border-bottom: 1px solid #aaaacc;
	font-size: 11px;
	font-weight: 700;
	line-height: 24px;
}

.page-nav a {
	color: #000;
}

.columns {
	display: flex;
	margin-top: 2px;
	background: #fcfcfe;
}

.tree {
	position: relative;
	width: 368px;
	padding: 7px 4px;
	border-right: 1px solid #aaaacc;
}

.expand {
	position: absolute;
	top: 1px;
	right: 1px;
}

.server {
	display: flex;
	align-items: center;
	gap: 4px;
	font-size: 18px;
	font-weight: 400;
	line-height: 24px;
}

.server-menu {
	display: flex;
	gap: 8px;
	padding: 10px 0 0 30px;
	font-size: 11px;
}

.server-menu a {
	display: flex;
	flex-direction: column;
	align-items: center;
	gap: 6px;
	line-height: 16px;
}

.logged {
	padding: 4px 0 0 25px;
	font-size: 10px;
	line-height: 14px;
}

.node {
	display: flex;
	align-items: center;
	gap: 3px;
	padding: 8px 0 0 54px;
	line-height: 18px;
}

.node a {
	color: #000;
}

.eq {
	color: #00f;
}

.comma {
	color: #f00;
}

.entry {
	flex: 1;
	min-width: 0;
	padding: 3px 4px 27px 3px;
}

.notice {
	display: flex;
	gap: 7px;
	margin: 0 -4px 3px 0;
	padding: 0 4px;
	border-bottom: 2px solid #aaaacc;
}

.notice h3 {
	font-size: 13px;
	line-height: 19px;
}

.notice p {
	line-height: 23px;
}

.entry-head {
	margin-left: 3px;
	border: 1px solid #000;
	background: #000088;
	color: #fff;
	text-align: center;
}

.entry-head h1 {
	border-bottom: 1px solid #000;
	font-size: 19px;
	font-weight: 400;
	line-height: 44px;
}

.entry-head p {
	padding: 4px 0 5px;
	font-size: 10px;
	line-height: 13px;
}

.actions {
	display: grid;
	grid-template-columns: 6fr 7fr;
	padding: 15px 0 0 3px;
	font-size: 14px;
}

.actions li {
	position: relative;
	display: flex;
	align-items: center;
	gap: 3px;
	height: 24px;
}

.actions .tall {
	height: 32px;
}

.actions li > svg {
	width: 28px;
}

.actions .hint {
	color: #888;
	font-size: 13px;
}

.tooltip {
	position: absolute;
	z-index: 1;
	left: 138px;
	top: 38px;
	padding: 0 5px;
	border-radius: 4px;
	background: rgba(20, 20, 20, .88);
	color: #fff;
	font-family: Ubuntu, "Noto Sans", sans-serif;
	font-size: 15px;
	line-height: 27px;
	white-space: nowrap;
}

.attributes {
	width: 506px;
	margin: 22px auto 0;
	font-size: 12px;
}

.attr-head {
	display: flex;
	justify-content: space-between;
	padding-left: 5px;
	background: #e0e0e0;
	font-size: 13px;
	font-weight: 700;
	line-height: 27px;
}

.attr-head span {
	font-size: 9px;
	font-weight: 400;
	line-height: 24px;
}

.attributes u {
	text-decoration: none;
	border-bottom: 1px dotted #000;
}

.attr-row {
	display: grid;
	grid-template-columns: 84px 356px 1fr;
	align-items: center;
	padding: 9px 0 8px;
}

.attr-row svg {
	margin-left: 54px;
}

.attr-row input {
	width: 356px;
	height: 23px;
	padding: 0 2px;
	border: 2px solid;
	border-color: #999 #eee #eee #999;
	background: #fff;
	color: #000;
	font: 14px Ubuntu, "Noto Sans", sans-serif;
}

.attr-row .fixed {
	width: 352px;
	height: 20px;
	border: 0;
}

.attr-row + .attr-head {
	margin-top: 7px;
}

.attr-row.next {
	padding: 2px 0 10px;
}

.mark {
	text-align: right;
	line-height: 12px;
}

.kind {
	padding-left: 2px;
	font-size: 11px;
}

.attr-links {
	padding: 0 0 12px 84px;
	line-height: 16px;
}

.attr-links small {
	display: block;
	font-size: 10px;
}

.update {
	display: block;
	margin: 8px auto 0;
	padding: 0 12px;
	border: 1px solid #aaa8a5;
	border-radius: 4px;
	background: linear-gradient(#fff, #ececeb);
	color: #4c4c4c;
	font: 15px/25px Ubuntu, "Noto Sans", sans-serif;
}

.version {
	margin-top: 2px;
	padding: 2px;
	border-top: 1px solid #aaaacc;
	font-size: 11px;
	font-weight: 700;
	text-align: right;
}

.status {
	position: absolute;
	left: 0;
	bottom: 0;
	padding: 0 4px;
	border: 1px solid #c3c1be;
	border-width: 1px 1px 0 0;
	border-radius: 0 4px 0 0;
	background: #f2f1f0;
	color: #4c4c4c;
	line-height: 21px;
}
```
